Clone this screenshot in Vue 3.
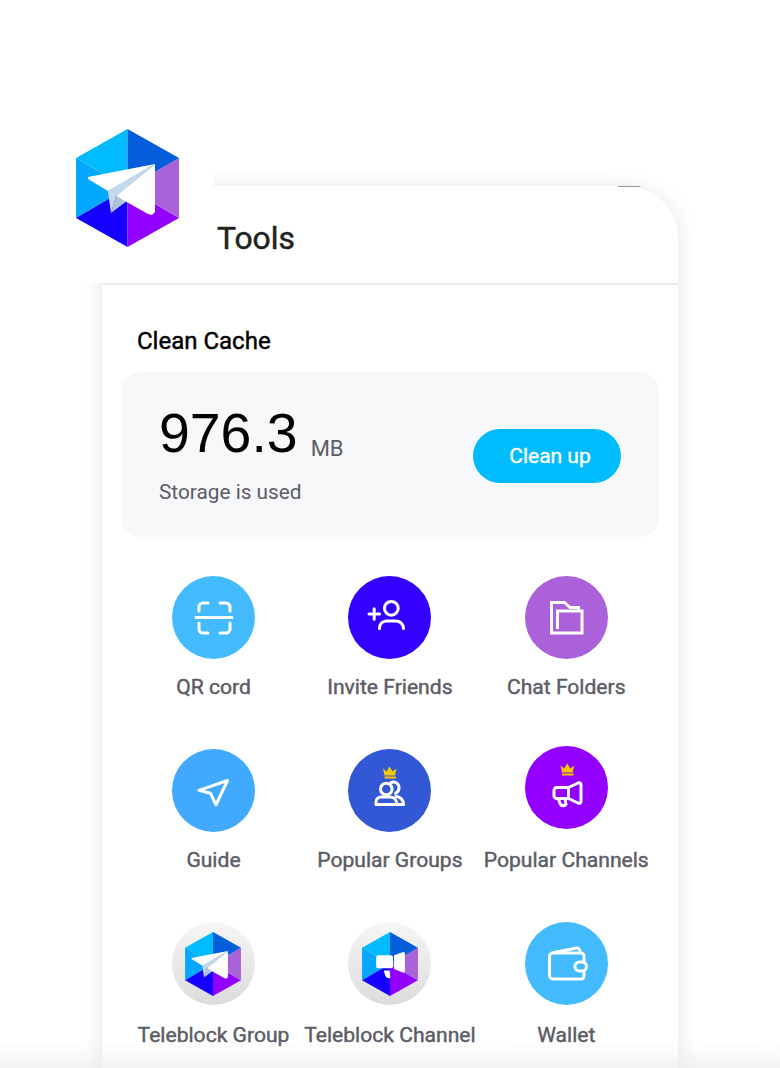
<template>
  <div class="page">
    <div class="phone">
      <header class="topbar">
        <span class="clock-cut"></span>
        <h1>Tools</h1>
      </header>
      <main class="content">
        <h2>Clean Cache</h2>
        <section class="cache-card">
          <div class="cache-info">
            <div class="cache-size"><span class="num">976.3</span><span class="unit">MB</span></div>
            <div class="cache-note">Storage is used</div>
          </div>
          <button type="button" class="clean-btn">Clean up</button>
        </section>
        <div class="tools-grid">
          <div v-for="t in tools" :key="t.label" class="tool">
            <div class="tool-circle" :class="t.cls">
              <svg v-if="t.hex" class="mini-hex" viewBox="76 129 103 118" width="56" height="64">
                <polygon v-for="f in hexFaces" :key="f.c" :points="f.p" :fill="f.c" />
                <template v-if="t.hex === 'plane'">
                  <polygon v-for="s in planeParts" :key="s.p" :points="s.p" :fill="s.c" />
                </template>
                <g v-else fill="#fff">
                  <rect x="102" y="172" width="31" height="24" rx="4" />
                  <path d="M135 172l17-6q3 0 3 3v32q0 3-3 3l-17-7z" />
                  <path d="M116 200h11l1 14q-6 1-9-4z" />
                </g>
              </svg>
              <svg v-else class="glyph" viewBox="0 0 83 83" width="83" height="83">
                <g v-if="t.icon === 'qr'" class="ln">
                  <path d="M27 35v-4a4 4 0 0 1 4-4h5M48 27h6a4 4 0 0 1 4 4v4M27 47v6a4 4 0 0 0 4 4h5M58 47v6a4 4 0 0 1-4 4h-6M24 41.5h36" />
                </g>
                <g v-else-if="t.icon === 'invite'" class="ln">
                  <circle cx="43.3" cy="32.3" r="6.9" />
                  <path d="M31.5 52.5c0-4.500 3-7.500 7-7.500h9.500c4 0 7.500 3 7.500 7.500M21 38h10.500M26.200 32.800v10.500" />
                </g>
                <g v-else-if="t.icon === 'folder'" class="ln sq">
                  <path d="M32.500 53V35H57v22H26.500V26.500h13l5.500 5h8.500V35" />
                </g>
                <g v-else-if="t.icon === 'guide'" class="ln">
                  <path d="M55.500 31.500L27 41.300l11.500 3 5.500 11.500z" />
                </g>
                <g v-else-if="t.icon === 'groups'">
                  <path class="crown" d="M35 19.500l3.500 3 3-5 3.200 5 3.800-3-1.500 7h-10.500zM36.500 27.500h11.500v2H36.500z" />
                  <g class="ln">
                    <circle cx="38.300" cy="40" r="5.800" />
                    <path d="M28 55.500v-2.500c0-3 2.500-5 5-5h9c3 0 6 2 6.500 5v2.500zM43 33.500c4-1.500 8 1 8 5 0 3-1.500 5-3.500 6M48 47.500c4 0 7.500 3 7.500 8H50" />
                  </g>
                </g>
                <g v-else-if="t.icon === 'channels'">
                  <path class="crown" d="M35.500 19.500l3.500 3 3.200-5 3.200 5 3.800-3-1.500 7H37zM37 27.500h11.500v2H37z" />
                  <g class="ln">
                    <path d="M43.500 41.500H32a3 3 0 0 0-3 3v5a3 3 0 0 0 3 3h11.500zM43.500 41.500l9.500-4.500q3-1 3 2v16q0 3-3 2l-9.500-4.500M33.500 53l1.500 4.500q1.500 3 4.500 2l1.500-1-1-5.500" />
                  </g>
                </g>
                <g v-else-if="t.icon === 'wallet'" class="ln">
                  <path d="M59 39v-5a3 3 0 0 0-3-3H28a3.500 3.500 0 0 0-3.500 3.500v19a3.500 3.500 0 0 0 3.500 3.500h28a3 3 0 0 0 3-3v-4M27 31l24-5q3.500-.5 4.500 4.500" />
                  <rect class="clasp" x="50" y="40" width="11.500" height="9" rx="4.500" />
                </g>
              </svg>
            </div>
            <div class="tool-label">{{ t.label }}</div>
          </div>
        </div>
      </main>
    </div>

    <div class="logo-patch">
      <svg class="logo" viewBox="76 129 103 118" width="103" height="118">
        <polygon v-for="f in hexFaces" :key="f.c" :points="f.p" :fill="f.c" />
        <polygon v-for="s in planeParts" :key="s.p" :points="s.p" :fill="s.c" />
      </svg>
    </div>
    <div class="bottom-fade"></div>
  </div>
</template>

<script setup>
const center = "127.500,188";

const hexFaces = [
  { p: `127.500,129 76,158 ${center}`, c: "#00bbff" },
  { p: `76,158 76,218 ${center}`, c: "#05a8ff" },
  { p: `76,218 127.500,247 ${center}`, c: "#1500ff" },
  { p: `127.500,247 179,218 ${center}`, c: "#9200ff" },
  { p: `179,218 179,158 ${center}`, c: "#aa62d8" },
  { p: `179,158 127.500,129 ${center}`, c: "#045dd9" },
];

const planeParts = [
  { p: "111,213 116,196 127,201", c: "#aac6d8" },
  { p: "155,164 108,191 111,213 116,196", c: "#c6d9ea" },
  { p: "155,164 88,177 88,179 108,191", c: "#ffffff" },
  { p: "155,164 116,196 148,214 152,215 155,212", c: "#ffffff" },
];

const tools = [
  { label: "QR cord", cls: "c-qr", icon: "qr" },
  { label: "Invite Friends", cls: "c-invite", icon: "invite" },
  { label: "Chat Folders", cls: "c-folder", icon: "folder" },
  { label: "Guide", cls: "c-guide", icon: "guide" },
  { label: "Popular Groups", cls: "c-groups", icon: "groups" },
  { label: "Popular Channels", cls: "c-channels lifted", icon: "channels" },
  { label: "Teleblock Group", cls: "c-hex", hex: "plane" },
  { label: "Teleblock Channel", cls: "c-hex", hex: "horn" },
  { label: "Wallet", cls: "c-qr", icon: "wallet" },
];
</script>

<style>
html,
body {
  background: #fff;
}
</style>

<style scoped>
.page {
  position: relative;
  width: 780px;
  height: 1068px;
  overflow: hidden;
  padding: 186px 0 0 102px;
  box-sizing: border-box;
  background: #fff;
  font-family: Roboto, "Liberation Sans", sans-serif;
}

.phone {
  width: 576px;
  min-height: 950px;
  background: #fff;
  border-top-right-radius: 52px;
  box-shadow: 0 2px 22px rgba(0, 0, 0, 0.11);
}

.topbar {
  position: relative;
  height: 97px;
  border-bottom: 2px solid #e9e9e9;
  padding-left: 115px;
  box-sizing: content-box;
}

.topbar h1 {
  margin: 0;
  padding-top: 31px;
  font-size: 31.8px;
  line-height: 42px;
  font-weight: 400;
  -webkit-text-stroke: 0.5px #222;
  color: #222;
}

.clock-cut {
  position: absolute;
  top: 0;
  left: 516px;
  width: 22px;
  height: 1px;
  background: #999;
}

.content {
  padding: 41px 19px 0;
}

.content h2 {
  margin: 0 0 16px 16px;
  font-size: 24px;
  line-height: 30px;
  font-weight: 400;
  -webkit-text-stroke: 0.45px #000;
  color: #000;
}

.cache-card {
  display: flex;
  align-items: center;
  justify-content: space-between;
  width: 538px;
  height: 165px;
  box-sizing: border-box;
  padding: 0 38px;
  background: #f7f8fa;
  border-radius: 20px;
}

.cache-info {
  margin-top: -4px;
}

.cache-size {
  display: flex;
  align-items: baseline;
  gap: 13px;
}

.num {
  font-family: "Liberation Sans", Arial, sans-serif;
  font-size: 55.4px;
  line-height: 64px;
  color: #000;
}

.unit {
  font-size: 22px;
  color: #5c5c66;
  transform: translateY(4px);
}

.cache-note {
  margin-top: 14px;
  font-size: 20.8px;
  line-height: 26px;
  color: #5c5c66;
}

.clean-btn {
  width: 148px;
  height: 54px;
  border: 0;
  border-radius: 27px;
  background: #00bcff;
  color: #fff;
  font-family: inherit;
  font-size: 21px;
  font-weight: 400;
  -webkit-text-stroke: 0.4px #fff;
  margin-top: 2px;
  padding: 0 0 0 6px;
}

.tools-grid {
  display: grid;
  grid-template-columns: repeat(3, 176.4px);
  grid-auto-rows: 173px;
  margin: 39px 0 0 4.3px;
}

.tool {
  display: flex;
  flex-direction: column;
  align-items: center;
}

.tool-circle {
  width: 83px;
  height: 83px;
  border-radius: 50%;
  display: flex;
  align-items: center;
  justify-content: center;
  flex: none;
}

.lifted {
  margin-top: -3px;
  margin-bottom: 3px;
}

.tool-label {
  margin-top: 15px;
  font-size: 21.1px;
  line-height: 26px;
  font-weight: 400;
  -webkit-text-stroke: 0.45px #5c5c66;
  color: #5c5c66;
  white-space: nowrap;
}

.tool:nth-child(n + 7) .tool-label {
  margin-top: 17px;
}

.c-qr { background: #45bbff; }
.c-invite { background: #3300ff; }
.c-folder { background: #aa61d9; }
.c-guide { background: #41a9ff; }
.c-groups { background: #3358d6; }
.c-channels { background: #9300ff; }
.c-hex { background: linear-gradient(#f6f6f6, #dcdcdc); }

.ln {
  fill: none;
  stroke: #fff;
  stroke-width: 3;
  stroke-linecap: round;
  stroke-linejoin: round;
}

.clasp {
  fill: #45bbff;
}

.sq {
  stroke-linecap: butt;
  stroke-linejoin: miter;
}

.crown {
  fill: #f4c800;
}

.logo-patch {
  position: absolute;
  left: 60px;
  top: 100px;
  width: 153px;
  height: 183px;
  background: #fff;
  border-bottom-left-radius: 24px;
}

.logo {
  position: absolute;
  left: 16px;
  top: 29px;
}

.bottom-fade {
  position: absolute;
  left: 0;
  right: 0;
  bottom: 0;
  height: 26px;
  background: linear-gradient(rgba(235, 235, 235, 0), rgba(235, 235, 235, 0.6));
  pointer-events: none;
}
</style>
